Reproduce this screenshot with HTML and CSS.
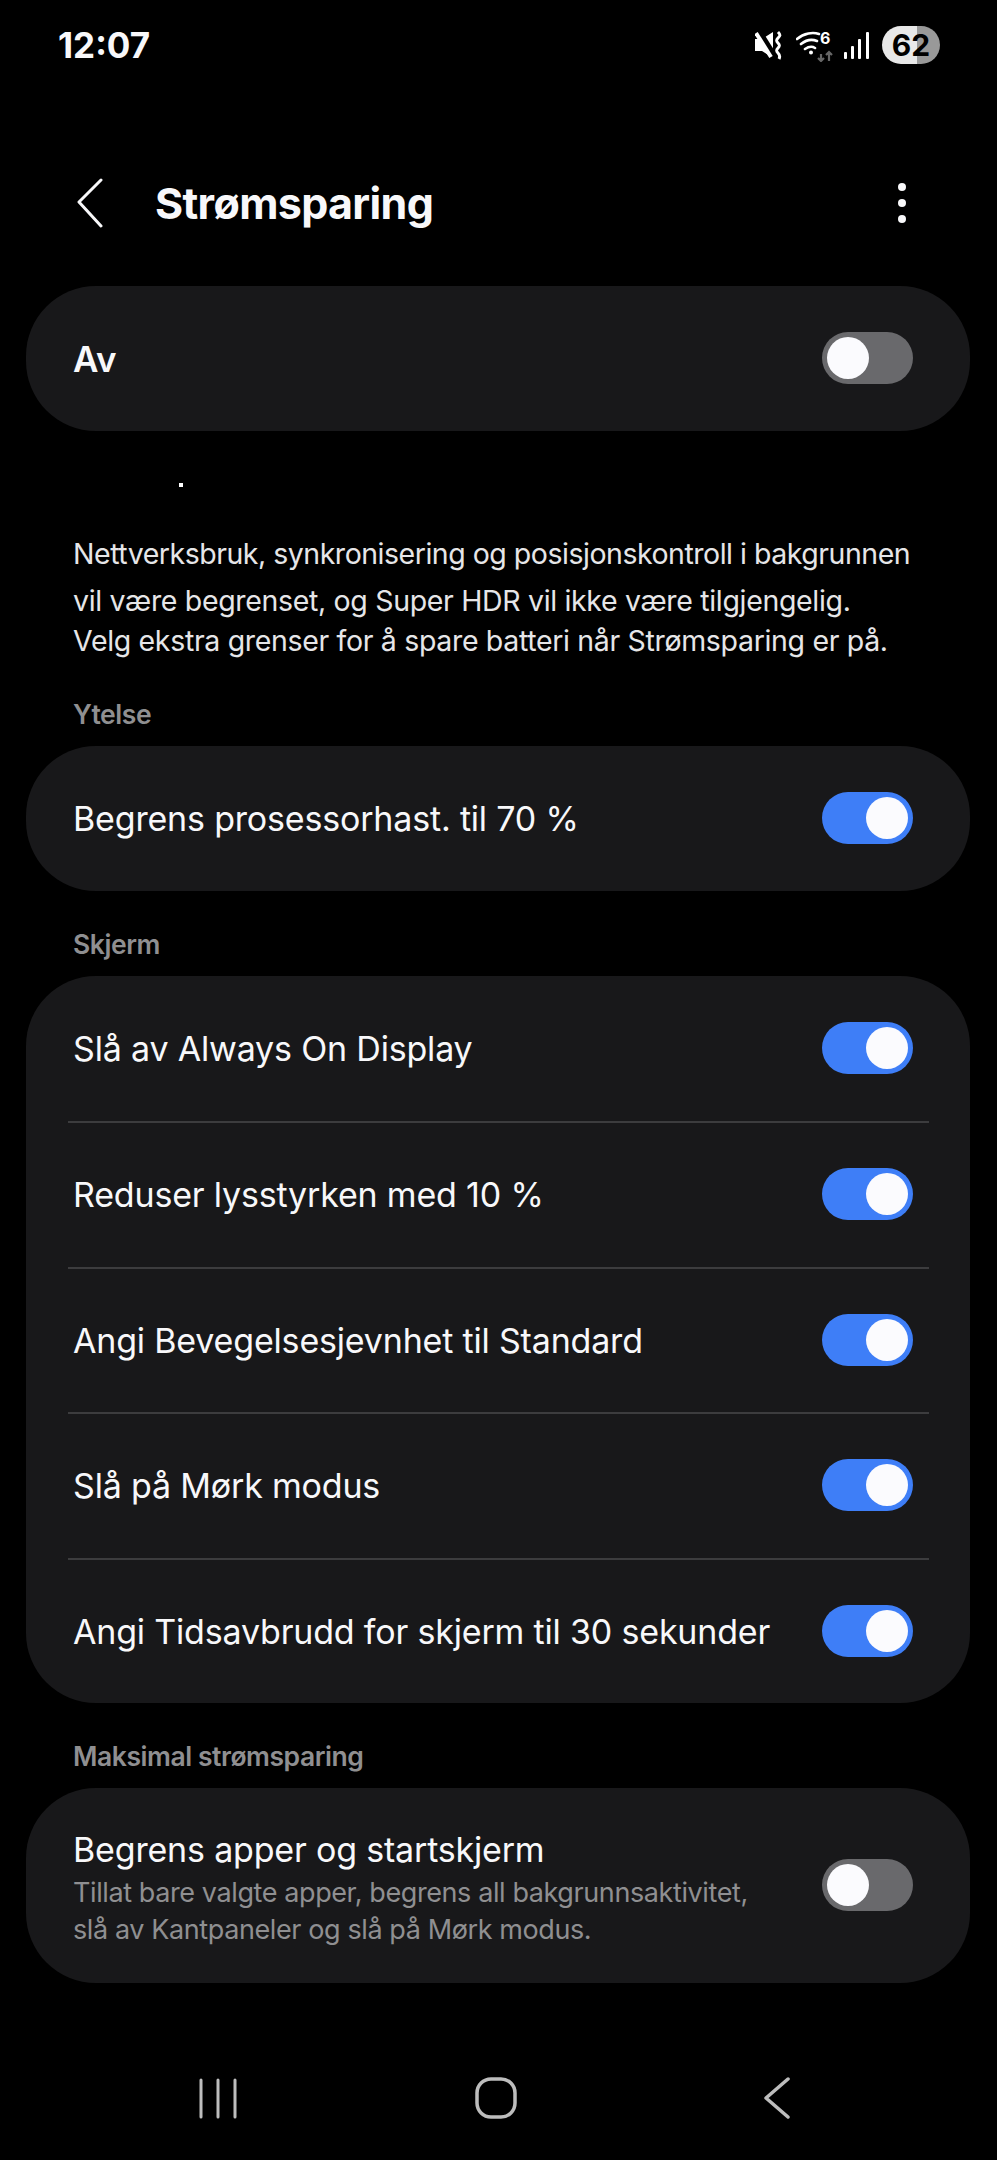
FILE: index.html
```html
<!DOCTYPE html>
<html lang="nb">
<head>
    <meta charset="UTF-8">
    <title>Strømsparing</title>
    <link rel="stylesheet" href="styles.css">
</head>
<body>
    <div class="screen">
        <div class="status-bar">
            <span class="clock">12:07</span>
            <div class="status-icons">
                <svg class="ic-mute" width="27" height="30" viewBox="0 0 27 30">
                    <path d="M0 9h7L18 2v26L7 21H0z" fill="#fff"/>
                    <path d="M3 1l17 27" stroke="#000" stroke-width="7"/>
                    <path d="M1 3l15 24" stroke="#fff" stroke-width="4"/>
                    <path d="M23 2c3 3 2 4 0 6s-2 3 0 5 2 3 0 5-2 3 0 5 2 4 1 6" fill="none" stroke="#fff" stroke-width="3"/>
                </svg>
                <svg class="ic-wifi" width="38" height="34" viewBox="0 -4 38 34">
                    <path d="M1 7c7-6 16-7 22-5M5 12c5-4 11-5 16-3M9 17c3-2 7-3 10-1" fill="none" stroke="#fff" stroke-width="2.600" stroke-linecap="round"/>
                    <circle cx="15" cy="20.500" r="2" fill="#fff"/>
                    <path d="M25 22v7M22 26l3 3 3-3M33 29v-9M30 23l3-3 3 3" fill="none" stroke="#666" stroke-width="2.200"/>
                    <text class="wifi-six" x="24" y="12">6</text>
                </svg>
                <svg class="ic-signal" width="25" height="27" viewBox="0 0 25 27">
                    <rect x="0" y="20" width="3" height="7" rx="1" fill="#fff"/>
                    <rect x="7" y="14" width="3" height="13" rx="1" fill="#fff"/>
                    <rect x="14" y="7" width="3" height="20" rx="1" fill="#fff"/>
                    <rect x="22" y="0" width="3" height="27" rx="1" fill="#fff"/>
                </svg>
                <span class="battery">62</span>
            </div>
        </div>

        <div class="app-bar">
            <svg class="back" width="28" height="50" viewBox="0 0 28 50">
                <path d="M25 2L3 24l22 24" fill="none" stroke="#f8f8fa" stroke-width="3" stroke-linecap="round" stroke-linejoin="round"/>
            </svg>
            <h1>Strømsparing</h1>
            <div class="more"><i></i><i></i><i></i></div>
        </div>

        <div class="card">
            <div class="row">
                <span class="row-title strong">Av</span>
                <span class="toggle"><i></i></span>
            </div>
        </div>

        <div class="lone-dot"></div>

        <div class="intro">
            <div class="l1">Nettverksbruk, synkronisering og posisjonskontroll i bakgrunnen</div>
            <div class="l2">vil være begrenset, og Super HDR vil ikke være tilgjengelig.</div>
            <div class="l3">Velg ekstra grenser for å spare batteri når Strømsparing er på.</div>
        </div>

        <div class="section-label first">Ytelse</div>
        <div class="card">
            <div class="row">
                <span class="row-title">Begrens prosessorhast. til 70 %</span>
                <span class="toggle on"><i></i></span>
            </div>
        </div>

        <div class="section-label">Skjerm</div>
        <div class="card">
            <div class="row">
                <span class="row-title">Slå av Always On Display</span>
                <span class="toggle on"><i></i></span>
            </div>
            <div class="row">
                <span class="row-title">Reduser lysstyrken med 10 %</span>
                <span class="toggle on"><i></i></span>
            </div>
            <div class="row">
                <span class="row-title">Angi Bevegelsesjevnhet til Standard</span>
                <span class="toggle on"><i></i></span>
            </div>
            <div class="row">
                <span class="row-title">Slå på Mørk modus</span>
                <span class="toggle on"><i></i></span>
            </div>
            <div class="row">
                <span class="row-title">Angi Tidsavbrudd for skjerm til 30 sekunder</span>
                <span class="toggle on"><i></i></span>
            </div>
        </div>

        <div class="section-label">Maksimal strømsparing</div>
        <div class="card">
            <div class="row tall">
                <div class="row-text">
                    <div class="row-title">Begrens apper og startskjerm</div>
                    <div class="row-sub">Tillat bare valgte apper, begrens all bakgrunnsaktivitet,<br>slå av Kantpaneler og slå på Mørk modus.</div>
                </div>
                <span class="toggle"><i></i></span>
            </div>
        </div>

        <div class="nav-bar">
            <svg width="38" height="41" viewBox="0 0 38 41">
                <path d="M2 2v37M19 2v37M36 2v37" stroke="#bdbdbd" stroke-width="3" stroke-linecap="round"/>
            </svg>
            <svg width="42" height="42" viewBox="0 0 42 42">
                <rect x="2" y="2" width="38" height="38" rx="14" fill="none" stroke="#bdbdbd" stroke-width="3.500"/>
            </svg>
            <svg width="26" height="42" viewBox="0 0 26 42">
                <path d="M24 2L2 21l22 19" fill="none" stroke="#bdbdbd" stroke-width="3.500" stroke-linecap="round" stroke-linejoin="round"/>
            </svg>
        </div>
    </div>
</body>
</html>
```

FILE: styles.css
```css
html, body {
    margin: 0;
    background: #000;
}
.screen {
    width: 997px;
    height: 2160px;
    overflow: hidden;
    font-family: Inter, "Noto Sans", sans-serif;
    color: #f8f8fa;
    display: flex;
    flex-direction: column;
}

/* status bar */
.status-bar {
    height: 90px;
    padding: 0 57px 0 58px;
    display: flex;
    align-items: center;
    justify-content: space-between;
}
.clock {
    font-size: 35px;
    font-weight: 700;
}
.status-icons {
    display: flex;
    align-items: center;
}
.ic-mute { margin-right: 14px; }
.ic-wifi { margin-right: 10px; }
.ic-signal { margin-right: 13px; }
.wifi-six {
    font-size: 16px;
    font-weight: 700;
    fill: #fff;
}
.battery {
    width: 58px;
    height: 38px;
    border-radius: 19px;
    background: linear-gradient(90deg, #e8e8e8 60%, #999 60%);
    color: #000;
    font-size: 30px;
    font-weight: 700;
    line-height: 38px;
    text-align: center;
}

/* app bar */
.app-bar {
    height: 196px;
    padding: 30px 0 0 76px;
    box-sizing: border-box;
    display: flex;
    align-items: center;
}
.app-bar h1 {
    margin: 0 0 0 51px;
    font-size: 43px;
    font-weight: 700;
    letter-spacing: -0.650px;
}
.more {
    margin-left: auto;
    margin-right: 91px;
    display: flex;
    flex-direction: column;
    gap: 8px;
}
.more i {
    width: 8px;
    height: 8px;
    border-radius: 50%;
    background: #f8f8fa;
}

/* cards and rows */
.card {
    margin: 0 27px 0 26px;
    background: #18181a;
    border-radius: 70px;
}
.row {
    height: 145px;
    margin: 0 41px 0 47px;
    padding: 0 16px 0 0;
    display: flex;
    align-items: center;
    justify-content: space-between;
    box-sizing: border-box;
}
.row + .row {
    border-top: 2px solid #3c3c3e;
    height: 145.500px;
    margin-left: 42px;
    margin-right: 41px;
    padding-left: 5px;
}
.row.tall { height: 195px; }
.row-text { padding-top: 6px; }
.row-title {
    font-size: 34px;
    font-weight: 400;
    letter-spacing: -0.180px;
}
.row-title.strong {
    font-size: 35px;
    font-weight: 600;
}
.row-sub {
    margin-top: 4px;
    font-size: 27px;
    line-height: 37px;
    letter-spacing: -0.400px;
    color: #8f8f91;
}

/* toggle */
.toggle {
    flex: none;
    width: 91px;
    height: 52px;
    margin-bottom: 1px;
    padding: 5px;
    box-sizing: border-box;
    border-radius: 26px;
    background: #69696c;
    display: flex;
    justify-content: flex-start;
}
.toggle.on {
    background: #3e7ef7;
    justify-content: flex-end;
}
.toggle i {
    width: 42px;
    height: 42px;
    border-radius: 50%;
    background: #fbfbfe;
}

/* text above the first section */
.lone-dot {
    width: 4px;
    height: 4px;
    margin: 52px 0 0 179px;
    background: #fff;
}
.intro {
    margin: 47px 0 0 73px;
    font-size: 28.500px;
    line-height: 40px;
    letter-spacing: -0.330px;
    white-space: nowrap;
    color: #e6e6e8;
}
.intro .l1 { letter-spacing: -0.480px; }
.intro .l2 { margin-top: 7px; }

.section-label {
    margin: 35px 0 13px 73px;
    height: 37px;
    font-size: 26.500px;
    font-weight: 600;
    line-height: 37px;
    letter-spacing: -0.450px;
    color: #8f8f91;
}
.section-label.first {
    margin-top: 35px;
}

/* bottom navigation */
.nav-bar {
    margin-top: auto;
    height: 42px;
    padding: 0 0 41px 199px;
    display: flex;
    align-items: center;
}
.nav-bar svg:nth-child(2) { margin: 0 247px 0 238px; }
```
